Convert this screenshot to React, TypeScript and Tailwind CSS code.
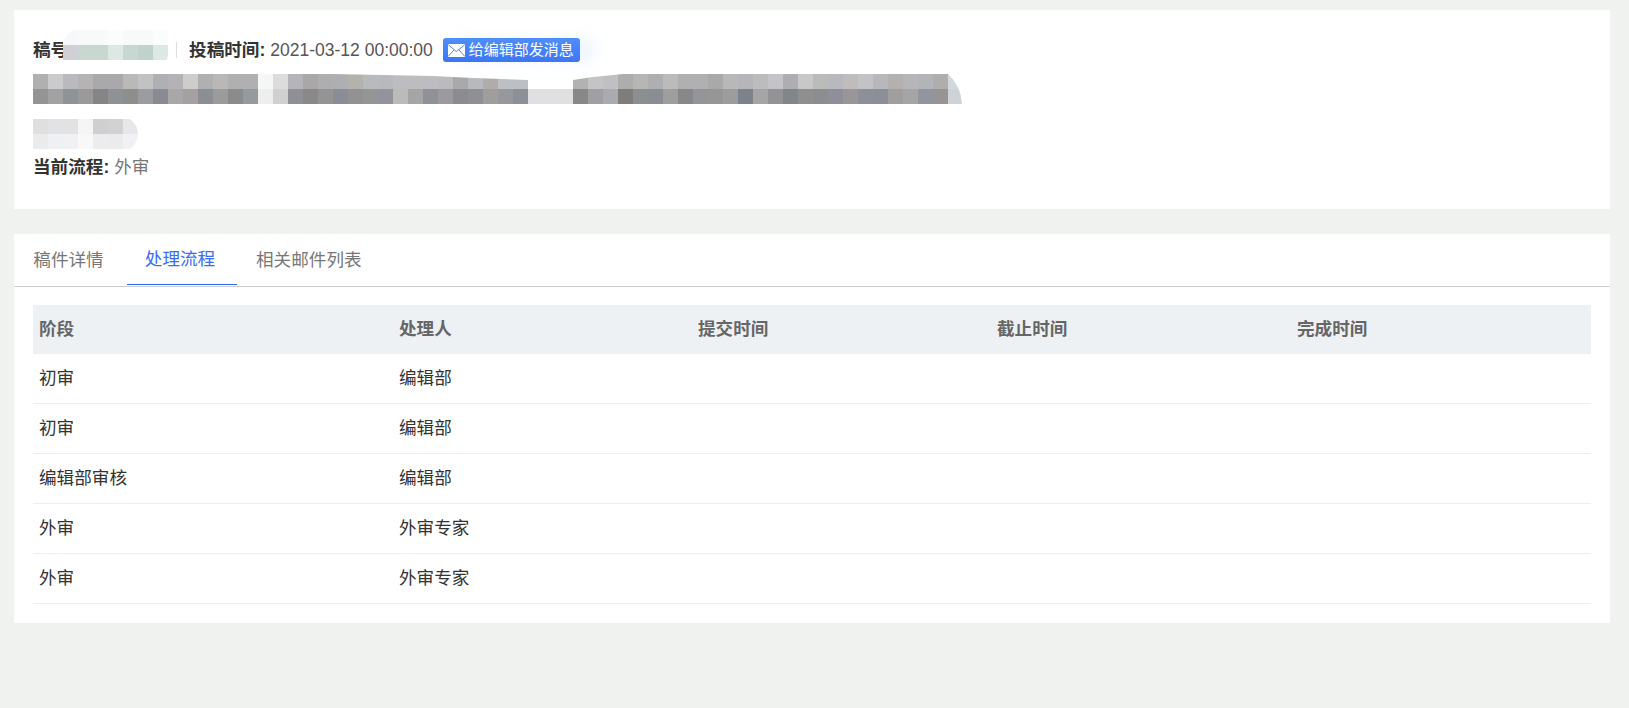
const font = { fontFamily: '"Liberation Sans", "Noto Sans CJK SC", sans-serif' };

const lineTop = ['b0b0b0','cbcbcd','b9b9be','b5b3b3','a9a9ab','a9a9ab','bab9b8','c2c2c2','aeb0b3','b4b2b6','cdcdcb','b0b0b2','b9b8b6','b0b0b2','b0b0b2','f5f6f6','dcdcdc','b4b4ba','a9a8a6','aeaeb0','aeafb3','b4b2ad','b8bbbe','b8b9bc','bdbdc1','bdbdc0','bdbcc0','bbbbbd','a9a9ab','b8b9bd','b0acac','bcc0c4','bcc0c4','ffffff','ffffff','ffffff','b2b2b2','c4c4c6','c0c0c4','adadad','b6b7b5','aeafb3','bbbbbb','b0b0b2','b0b0b2','aba8aa','b8b8ba','b6b6ba','bcbcbe','c4c4c8','aeaeb2','c8c8c8','babcba','b8b8be','c0bcbc','c2c3c7','b8b8bc','b4b0b0','b6b6b8','b2b4b8','b0aeac','d0d8dc'];
const lineBottom = ['949494','a2a2a2','8f9297','9a9a9a','858585','8f9295','8e8e8c','9a9ca0','898a92','a8a8a8','a5a0a2','8b8e93','9b9b9b','8b8b8b','969a9c','eeeeee','d1d0ce','8e9096','898989','949494','8a8d95','929292','939694','93939b','bbbbbb','a5a5a5','8e9196','9c9a9e','8b8b90','8f9095','a09e9c','96989c','8e9097','e0e0e2','e0e0e2','e0e0e2','888888','a0a0a2','a8acb0','7f7d7a','8c8f90','8a8d94','9e9e9e','888888','939698','969696','9c9c9c','7b828c','a5a5a5','939396','82868a','8f8f8f','8b8e90','8f8f99','989696','8d9099','8c8e98','a09e9e','a5a5a5','92959d','989494','cfd3d7'];
const shortTop = ['e0dfe0','e2e2e4','e2e2e4','f4f6f6','d0cfcf','d2d2d2','e6e7ea'];
const shortBottom = ['ebebeb','eff0f3','f1f1f3','f8f8f8','ececee','ebebed','f1f1f3'];
const idTop = ['f7f8f9','f8fafa','f8fafa','fbfcfc','f8fafa','f8fafa','fbfcfc'];
const idBottom = ['d0d0d6','c8d8d0','c8d8d0','dde8e4','c6d8d0','c0d2cc','dce8e4'];

// pixelated cover over the blanked-out text
function Mosaic({ rows, mask, className }: { rows: string[][]; mask: string; className: string }) {
  const w = rows[0].length * 15;
  return (
    <svg className={className} width={w} height={30} viewBox={`0 0 ${w} 30`} aria-hidden>
      {rows.map((row, y) =>
        row.map((c, x) => <rect key={`${y}-${x}`} x={x * 15} y={y * 15} width={15.5} height={15.5} fill={`#${c}`} />),
      )}
      <path d={mask} fill="#fff" />
    </svg>
  );
}

const columns = ['阶段', '处理人', '提交时间', '截止时间', '完成时间'];
const rows = [
  ['初审', '编辑部'],
  ['初审', '编辑部'],
  ['编辑部审核', '编辑部'],
  ['外审', '外审专家'],
  ['外审', '外审专家'],
];

export default function App() {
  return (
    <div className="h-[708px] overflow-hidden bg-[#f0f2ef] pt-[10px] text-[17.6px] text-[#333]" style={font}>
      {/* Manuscript summary */}
      <section className="ml-[14px] w-[1596px] bg-white pl-[19px] pt-[24px] pb-[30px]">
        <div className="flex h-[32px] items-center">
          <b className="shrink-0 whitespace-nowrap font-bold">稿号:</b>
          <Mosaic
            rows={[idTop, idBottom]}
            mask="M0 0H12Q2 3 0 14ZM105 0H90V0H105ZM105 16V30H104Q105 26 105 22Z"
            className="relative ml-[-11px] mt-[-10px] shrink-0"
          />
          <span className="ml-[8px] h-[16px] w-px bg-[#dddddd]" />
          <b className="ml-[12px] font-bold">投稿时间:</b>
          <span className="ml-[5px] text-[17.5px] text-[#555]">2021-03-12 00:00:00</span>
          <button className="ml-[10px] flex h-[24px] items-center gap-[4px] rounded-[3px] bg-gradient-to-b from-[#4f8ffb] to-[#3d75f5] pl-[5px] pr-[6px] text-[15px] text-white shadow-[14px_0_14px_rgba(210,225,255,0.35)]">
            <svg width="17" height="13" viewBox="0 0 17 13" aria-hidden>
              <rect width="17" height="13" rx="1" fill="#fff" />
              <path d="M0.5 1 8.5 7.5 16.5 1M0.5 12 6 6M16.5 12 11 6" fill="none" stroke="#4a86f8" strokeWidth="1" />
            </svg>
            给编辑部发消息
          </button>
        </div>
        <Mosaic
          rows={[lineTop, lineBottom]}
          mask="M300 0 400 2 440 4 495 6V15H540V6L560 3 590 0ZM915 0H930V30H929Q928 12 915 0Z"
          className="mt-[8px] block"
        />
        <Mosaic rows={[shortTop, shortBottom]} mask="M97 0H105V30H97Q105 24 105 15 105 6 97 0Z" className="mt-[15px] block" />
        <p className="mt-[6px] h-[24px] leading-[24px]">
          <b className="font-bold">当前流程:</b> <span className="text-[#777]">外审</span>
        </p>
      </section>

      {/* Tabs + flow table */}
      <section className="ml-[14px] mt-[25px] w-[1596px] bg-white pb-[19px]">
        <div className="flex h-[53px] border-b border-[#cccccc]">
          <button className="h-[52px] w-[112px] pr-[3px] text-[#777]">稿件详情</button>
          <button className="ml-px h-[51px] w-[110px] border-b border-[#2f62f5] pr-[4px] text-[#3a6cf6]">处理流程</button>
          <button className="h-[52px] pl-[19px] text-[#777]">相关邮件列表</button>
        </div>
        <div className="px-[19px] pt-[18px]">
          <table className="w-[1558px] table-fixed border-separate border-spacing-0 text-left">
            <colgroup>
              <col className="w-[360px]" />
              <col className="w-[299px]" />
              <col className="w-[299px]" />
              <col className="w-[300px]" />
              <col className="w-[300px]" />
            </colgroup>
            <thead>
              <tr className="h-[49px] bg-[#eef1f4] text-[#666]">
                {columns.map((c) => (
                  <th key={c} className="px-[6px] font-bold">{c}</th>
                ))}
              </tr>
            </thead>
            <tbody>
              {rows.map((r, i) => (
                <tr key={i} className="h-[50px]">
                  <td className="border-b border-[#eeeeee] px-[6px]">{r[0]}</td>
                  <td className="border-b border-[#eeeeee] px-[6px]">{r[1]}</td>
                  <td className="border-b border-[#eeeeee]" />
                  <td className="border-b border-[#eeeeee]" />
                  <td className="border-b border-[#eeeeee]" />
                </tr>
              ))}
            </tbody>
          </table>
        </div>
      </section>
    </div>
  );
}
